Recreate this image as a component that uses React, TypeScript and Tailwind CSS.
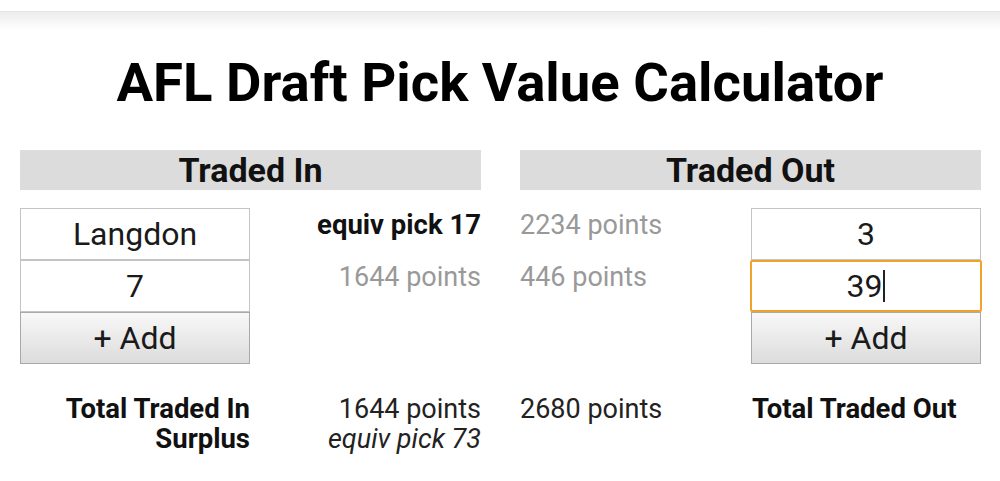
import React from "react";

const F = { fontFamily: "Roboto, 'Liberation Sans', sans-serif" };

function Box({ children, focus }: { children: React.ReactNode; focus?: boolean }) {
  return (
    <div
      className={
        focus
          ? "h-[52px] flex items-center justify-center border-2 border-[#f0a22a] rounded-[2px] -mx-[1px] text-[32px] text-[#1a1a1a] bg-white"
          : "h-[52px] flex items-center justify-center border border-[#c4c4c4] text-[32px] text-[#1a1a1a] bg-white"
      }
    >
      {children}
    </div>
  );
}

function AddBtn() {
  return (
    <div className="h-[52px] flex items-center justify-center border border-[#a9a9a9] text-[32px] text-[#1a1a1a] bg-gradient-to-b from-[#f8f8f8] to-[#dcdcdc]">
      + Add
    </div>
  );
}

export default function App() {
  return (
    <div style={F} className="w-[1000px] h-[481px] bg-white overflow-hidden relative">
      <div className="h-[12px] bg-white border-b border-[#e4e4e4]" />
      <div className="h-[18px] bg-gradient-to-b from-[#ececec] to-white" />
      <h1 className="text-center font-bold text-[54.5px] leading-[60px] text-black mt-[22px]">
        AFL Draft Pick Value Calculator
      </h1>
      <div className="px-[20px] mt-[38px] grid grid-cols-[461px_461px] gap-x-[39px]">
        {/* Left column */}
        <div>
          <div className="h-[40px] bg-[#dcdcdc] flex items-center justify-center font-bold text-[34px] text-[#111]">
            Traded In
          </div>
          <div className="mt-[18px] grid grid-cols-[230px_1fr]">
            <div className="flex flex-col">
              <Box>Langdon</Box>
              <Box>7</Box>
              <AddBtn />
            </div>
            <div className="flex flex-col text-right text-[27px] -mt-[9px]">
              <div className="h-[52px] leading-[52px] font-bold text-[#111] text-[27.5px]">equiv pick 17</div>
              <div className="h-[52px] leading-[52px] text-[#999]">1644 points</div>
            </div>
          </div>
          <div className="mt-[30px] grid grid-cols-[230px_1fr] leading-[30px]">
            <div className="text-right font-bold text-[#111] text-[27.5px]">
              <div>Total Traded In</div>
              <div>Surplus</div>
            </div>
            <div className="text-right text-[#222] text-[27px]">
              <div>1644 points</div>
              <div className="italic">equiv pick 73</div>
            </div>
          </div>
        </div>
        {/* Right column */}
        <div>
          <div className="h-[40px] bg-[#dcdcdc] flex items-center justify-center font-bold text-[34px] text-[#111]">
            Traded Out
          </div>
          <div className="mt-[18px] grid grid-cols-[1fr_230px]">
            <div className="flex flex-col text-left text-[27px] text-[#999] -mt-[9px]">
              <div className="h-[52px] leading-[52px]">2234 points</div>
              <div className="h-[52px] leading-[52px]">446 points</div>
            </div>
            <div className="flex flex-col">
              <Box>3</Box>
              <Box focus>
                <span>39</span>
                <span className="inline-block w-[2px] h-[32px] bg-[#222] ml-[1px]" />
              </Box>
              <AddBtn />
            </div>
          </div>
          <div className="mt-[30px] grid grid-cols-[1fr_230px] leading-[30px]">
            <div className="text-left text-[#222] text-[27px]">2680 points</div>
            <div className="text-left font-bold text-[#111] text-[27.5px] pl-[1px]">Total Traded Out</div>
          </div>
        </div>
      </div>
    </div>
  );
}
